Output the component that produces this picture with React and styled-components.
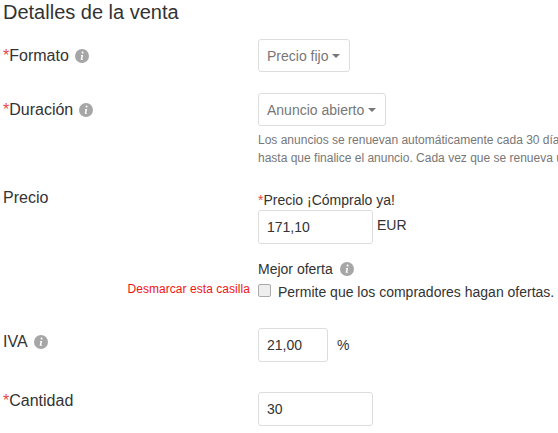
import styled, { createGlobalStyle } from "styled-components";

const GlobalStyle = createGlobalStyle`
  html, body {
    margin: 0;
    padding: 0;
    background: #fff;
  }
  body {
    font-family: "Liberation Sans", Arial, sans-serif;
    color: #333;
  }
`;

const InfoIcon = ({ className }) => (
  <svg className={className} viewBox="0 0 14 14" width="14" height="14" aria-hidden="true">
    <circle cx="7" cy="7" r="7" fill="#a6a6a6" />
    <path d="M7.6 2.6a1 1 0 1 1-.1 2 1 1 0 0 1 .1-2zM6 5.9h2.2l-.9 4h.8l-.2.9H5.6l.9-4h-.7z" fill="#fff" />
  </svg>
);

function App() {
  return (
    <Page>
      <GlobalStyle />
      <Title>Detalles de la venta</Title>

      <Row $top={10} $height={54}>
        <Label><Star>*</Star>Formato<Info /></Label>
        <Field>
          <Select $width={92}>Precio fijo<Caret /></Select>
        </Field>
      </Row>

      <Row $top={0} $height={99}>
        <Label><Star>*</Star>Duración<Info /></Label>
        <Field>
          <Select $width={128}>Anuncio abierto<Caret /></Select>
          <Help>
            Los anuncios se renuevan automáticamente cada 30 días
            <br />
            hasta que finalice el anuncio. Cada vez que se renueva un
          </Help>
        </Field>
      </Row>

      <Row $top={0} $height={136}>
        <Label $lift={11}>Precio</Label>
        <Field>
          <SubLabel><Star>*</Star>Precio ¡Cómpralo ya!</SubLabel>
          <InputRow>
            <Input $width={115} value="171,10" readOnly />
            <Unit $gap={4} $line={31}>EUR</Unit>
          </InputRow>
          <OfferLabel>Mejor oferta<Info /></OfferLabel>
          <CheckRow>
            <Warning>Desmarcar esta casilla</Warning>
            <Check />
            <CheckText>Permite que los compradores hagan ofertas.</CheckText>
          </CheckRow>
        </Field>
      </Row>

      <Row $top={0} $height={33}>
        <Label $lift={3}>IVA<Info /></Label>
        <InputRow>
          <Input $width={70} value="21,00" readOnly />
          <Unit $gap={9} $line={34}>%</Unit>
        </InputRow>
      </Row>

      <Row $top={31} $height={33}>
        <Label $lift={8}><Star>*</Star>Cantidad</Label>
        <Input $width={115} value="30" readOnly />
      </Row>
    </Page>
  );
}

const Page = styled.div`
  width: 558px;
  height: 433px;
  overflow: hidden;
  padding: 0 0 0 3px;
  box-sizing: border-box;
`;

const Title = styled.h2`
  margin: 0;
  height: 29px;
  font-size: 20px;
  font-weight: 400;
  line-height: 25px;
  color: #333;
`;

const Row = styled.div`
  display: grid;
  grid-template-columns: 255px 1fr;
  margin-top: ${(p) => p.$top}px;
  height: ${(p) => p.$height}px;
`;

const Label = styled.div`
  display: flex;
  align-items: flex-start;
  height: 33px;
  margin-top: ${(p) => -(p.$lift || 0)}px;
  font-size: 16px;
  line-height: 33px;
  white-space: nowrap;
  color: #333;
`;

const Star = styled.span`
  color: #e8483f;
`;

const Info = styled(InfoIcon)`
  margin: 10px 0 0 6px;
  flex: none;
`;

const Field = styled.div`
  display: flex;
  flex-direction: column;
  align-items: flex-start;
  min-width: 0;
`;

const Select = styled.div`
  display: flex;
  align-items: center;
  box-sizing: border-box;
  width: ${(p) => p.$width}px;
  height: 33px;
  padding: 0 8px;
  border: 1px solid #ddd;
  border-radius: 3px;
  font-size: 14px;
  color: #777;
  white-space: nowrap;
`;

const Caret = styled.span`
  width: 0;
  height: 0;
  margin-left: 4px;
  border-left: 4px solid transparent;
  border-right: 4px solid transparent;
  border-top: 4px solid #777;
`;

const Help = styled.p`
  margin: 5px 0 0;
  font-size: 12px;
  line-height: 18px;
  color: #777;
  white-space: nowrap;
`;

const SubLabel = styled.div`
  font-size: 14px;
  line-height: 17px;
  height: 18px;
  white-space: nowrap;
`;

const InputRow = styled.div`
  display: flex;
  align-items: flex-start;
`;

const Input = styled.input`
  box-sizing: border-box;
  width: ${(p) => p.$width}px;
  height: 34px;
  padding: 0 8px;
  border: 1px solid #ddd;
  border-radius: 3px;
  font-family: inherit;
  font-size: 14px;
  color: #333;
  outline: none;
`;

const Unit = styled.span`
  margin-left: ${(p) => p.$gap}px;
  font-size: 14px;
  line-height: ${(p) => p.$line}px;
  color: #333;
`;

const OfferLabel = styled.div`
  display: flex;
  align-items: center;
  margin-top: 16px;
  height: 18px;
  font-size: 14px;
  color: #333;
  white-space: nowrap;

  svg {
    margin: 0 0 0 7px;
  }
`;

const CheckRow = styled.div`
  position: relative;
  display: flex;
  align-items: center;
  margin-top: 4px;
  height: 18px;
  white-space: nowrap;
`;

const Warning = styled.span`
  position: absolute;
  right: calc(100% + 8px);
  top: -1px;
  font-size: 12px;
  line-height: 16px;
  letter-spacing: 0.05px;
  color: #f01414;
  white-space: nowrap;
`;

const Check = styled.span`
  box-sizing: border-box;
  width: 13px;
  height: 13px;
  margin-bottom: 2px;
  border: 1px solid #aaa;
  border-radius: 2px;
  background: #eee;
  flex: none;
`;

const CheckText = styled.span`
  margin-left: 7px;
  padding-top: 1px;
  font-size: 14px;
  color: #333;
`;

export default App;
